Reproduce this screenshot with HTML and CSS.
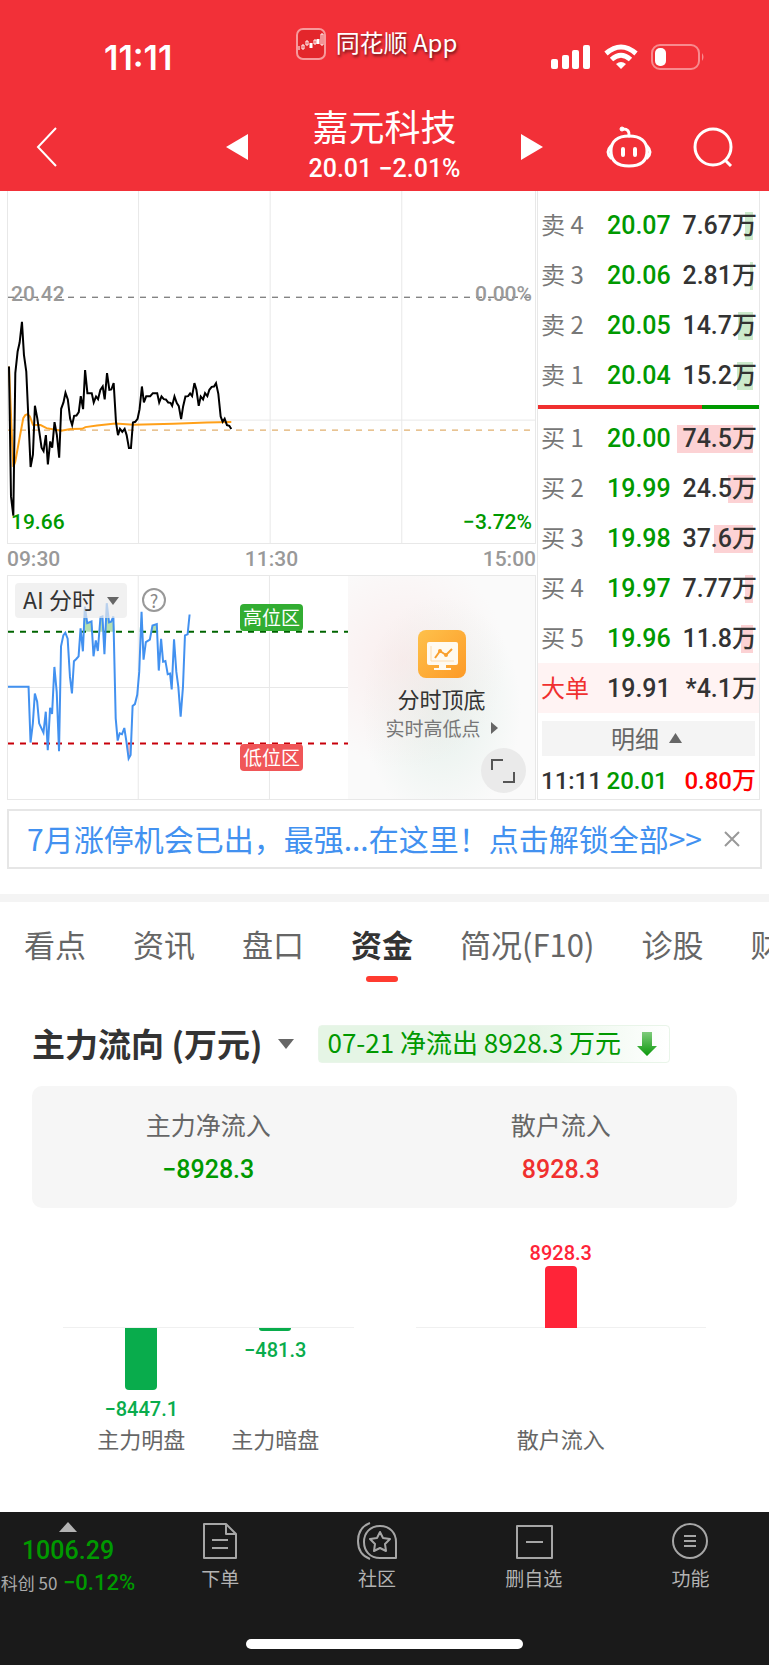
FILE: index.html
```html
<!DOCTYPE html>
<html lang="zh-CN">
<head>
	<meta charset="utf-8">
	<meta name="viewport" content="width=device-width, initial-scale=1">
	<title>嘉元科技</title>
	<link rel="stylesheet" href="styles.css">
</head>
<body>

	<header class="header">
		<div class="status-bar">
			<div class="status-time">11:11</div>
			<div class="status-app">
				<svg class="app-icon" width="30" height="32" viewBox="0 0 30 32" fill="none" stroke="#fff">
					<rect x="1" y="1" width="28" height="30" rx="6" fill="#e3262b" stroke="#f79a9c" stroke-width="2"/>
					<path d="M3 18v4M6 17v4h2v-4zM10 13v4h2v-4z"/>
					<path d="M15 15v5M22 11v5" stroke-width="3"/>
					<path d="M18 12v4h2v-4zM25 6v11h2V6z"/>
				</svg>
				<span>同花顺 App</span>
			</div>
			<div class="status-icons">
				<svg width="40" height="26" viewBox="0 0 40 26" fill="#fff">
					<rect x="0" y="15" width="7" height="10" rx="2"/>
					<rect x="11" y="11" width="7" height="14" rx="2"/>
					<rect x="21" y="6" width="7" height="19" rx="2"/>
					<rect x="32" y="1" width="7" height="24" rx="2"/>
				</svg>
				<svg width="34" height="26" viewBox="0 0 34 26" fill="none" stroke="#fff" stroke-width="5">
					<path d="M2 9.500Q17-3.500 32 9.500M7.500 15.500Q17 7 26.500 15.500"/>
					<path d="M17 25l-5-5q5-4 10 0z" fill="#fff" stroke="none"/>
				</svg>
				<svg width="54" height="26" viewBox="0 0 54 26" fill="none">
					<rect x="1" y="1" width="47" height="24" rx="8" stroke="#f88a8e" stroke-width="2"/>
					<rect x="4" y="4" width="11" height="18" rx="5" fill="#fff"/>
					<path d="M51 9q3 4 0 8z" fill="#f88a8e"/>
				</svg>
			</div>
		</div>

		<div class="title-bar">
			<button class="icon-button back-button" aria-label="返回">
				<svg width="22" height="40" viewBox="0 0 22 40" fill="none" stroke="#fff" stroke-width="2"><path d="M20 1L2 20l18 19"/></svg>
			</button>
			<div class="stock-switch">
				<button class="icon-button" aria-label="上一只"><svg width="22" height="26" viewBox="0 0 22 26" fill="#fff"><path d="M22 0v26L0 13z"/></svg></button>
				<div class="stock-title">
					<h1 class="stock-name">嘉元科技</h1>
					<div class="stock-price">20.01 −2.01%</div>
				</div>
				<button class="icon-button" aria-label="下一只"><svg width="22" height="26" viewBox="0 0 22 26" fill="#fff"><path d="M0 0v26l22-13z"/></svg></button>
			</div>
			<div class="title-actions">
				<button class="icon-button" aria-label="智能助手">
					<svg width="46" height="42" viewBox="0 0 46 42" fill="none" stroke="#fff" stroke-width="3">
						<path d="M23 10C12 10 5 15 5 25c0 10 6 15 18 15s18-5 18-15C41 15 34 10 23 10z"/>
						<path d="M5 20q-6 6 0 12M41 20q6 6 0 12M23 10q1-7-6-7" stroke-linecap="round"/>
						<circle cx="16" cy="3" r="2" fill="#fff" stroke-width="1"/>
						<path d="M17 23v6M29 23v6" stroke-width="4" stroke-linecap="round"/>
					</svg>
				</button>
				<button class="icon-button" aria-label="搜索">
					<svg width="40" height="40" viewBox="0 0 40 40" fill="none" stroke="#fff" stroke-width="3">
						<circle cx="20" cy="20" r="18"/><path d="M32 33l6 6"/>
					</svg>
				</button>
			</div>
		</div>
	</header>

	<section class="quote">
		<div class="charts">
			<div class="price-chart">
				<svg class="plot" viewBox="22 3 1586 1057" preserveAspectRatio="none">
					<path class="grid-line" d="M415 3V1060M811 3V1060M1207 3V1060M22 691H1608"/>
					<path class="base-line" d="M22 322H1608"/>
					<path class="now-line" d="M22 721H1608"/>
					<polyline class="avg-line" points="25,530 32,700 38,832 44,815 55,755 68,685 74,676 81,673 88,680 97,705 120,706 138,715 160,719 182,723 210,718 245,717 255,712 290,707 345,701 400,705 520,702 620,698 694,697"/>
					<polyline class="price-line" points="25,530 31,920 38,978 44,550 51,485 57,458 64,396 70,495 77,545 84,700 90,832 97,795 103,648 110,685 116,725 123,774 129,784 136,736 142,824 149,755 155,774 162,697 169,735 176,804 182,657 189,638 195,609 202,629 209,687 215,706 221,678 228,677 235,667 241,619 248,658 254,541 261,610 274,610 280,638 287,620 293,628 300,600 307,590 313,629 320,550 327,600 333,599 340,580 347,697 353,736 359,717 366,726 373,717 379,736 386,775 392,775 398,698 405,696 412,687 418,658 425,590 431,638 438,619 450,619 458,610 471,610 477,638 484,620 491,628 497,629 504,638 511,639 516,648 523,620 530,640 536,649 543,688 549,650 556,620 564,619 570,611 576,619 583,580 589,600 596,648 602,620 609,629 615,610 622,619 628,600 635,591 642,590 648,580 655,612 662,680 668,696 674,687 681,706 688,708 694,718"/>
				</svg>
				<span class="plot-label base-price">20.42</span>
				<span class="plot-label base-rate">0.00%</span>
				<span class="plot-label low-price">19.66</span>
				<span class="plot-label low-rate">−3.72%</span>
			</div>
			<div class="time-axis"><span>09:30</span><span>11:30</span><span>15:00</span></div>

			<div class="ai-chart">
				<div class="ai-plot">
					<svg class="plot" viewBox="22 16 1026 672" preserveAspectRatio="none">
						<defs>
							<clipPath id="high"><rect x="22" y="16" width="1026" height="168"/></clipPath>
							<clipPath id="low"><rect x="22" y="521" width="1026" height="167"/></clipPath>
						</defs>
						<path class="grid-line" d="M415 16V688M811 16V688M22 352H1048"/>
						<polygon clip-path="url(#high)" fill="#b4dfb0" points="241,184 248,184 254,108 261,158 274,153 280,190 295,190 301,140 307,138 313,190 320,98 327,156 333,154 340,138 345,190 418,190 425,124 431,190 450,190 458,165 471,161 477,190"/>
						<polygon clip-path="url(#low)" fill="#f5b8bd" points="136,515 142,541 149,515 170,515 176,544 179,515 379,515 386,566 392,555 395,515"/>
						<path class="high-line" d="M22 184H1048"/>
						<path class="low-line" d="M22 521H1048"/>
						<polyline class="ai-line" points="22,350 84,350 90,518 97,460 103,370 110,395 116,460 123,475 129,488 136,425 142,541 149,413 155,432 162,290 169,365 176,544 182,228 189,195 195,187 202,205 209,320 215,370 221,273 228,266 235,258 241,174 248,243 254,108 261,158 274,153 280,258 287,210 293,242 301,140 307,138 313,252 320,98 327,156 333,154 340,138 347,445 353,512 359,490 366,493 373,474 379,513 386,566 392,555 398,408 405,402 412,374 418,305 425,124 431,268 438,215 450,208 458,165 471,161 477,301 484,205 490,274 497,272 504,312 511,310 516,358 523,207 530,305 536,350 543,440 550,350 556,195 564,192 570,132"/>
					</svg>
					<button class="ai-select"><span>AI 分时</span> <svg width="12" height="8" viewBox="0 0 12 8" fill="#666"><path d="M0 0h12L6 8z"/></svg></button>
					<button class="help-button" aria-label="说明">?</button>
					<span class="zone high-zone">高位区</span>
					<span class="zone low-zone">低位区</span>
				</div>
				<div class="ai-promo">
					<svg class="promo-icon" width="48" height="48" viewBox="0 0 48 48" fill="none">
						<defs><linearGradient id="amber" x2="1" y2="1"><stop stop-color="#fec14b"/><stop offset="1" stop-color="#fd9a27"/></linearGradient></defs>
						<rect width="48" height="48" rx="8" fill="url(#amber)"/>
						<rect x="9" y="12" width="31" height="23" rx="2" fill="#fffaf0"/>
						<path d="M21 35h7v3h5v2H16v-2h5z" fill="#fffaf0"/>
						<path d="M13 16v15h23" stroke="#fddcae"/>
						<path d="M17 28l5-7 6 4 6-6" stroke="#f9a02e" stroke-width="2"/>
						<circle cx="22" cy="21" r="2" fill="#f9a02e"/><circle cx="28" cy="25" r="2" fill="#f9a02e"/>
					</svg>
					<div class="promo-title">分时顶底</div>
					<a class="promo-link" href="#">实时高低点 <svg width="7" height="12" viewBox="0 0 7 12" fill="#666"><path d="M0 0v12l7-6z"/></svg></a>
					<button class="expand-button" aria-label="全屏">
						<svg width="24" height="24" viewBox="0 0 24 24" fill="none" stroke="#555" stroke-width="2"><path d="M1 11V1h11M23 13v10H12"/></svg>
					</button>
				</div>
			</div>
		</div>

		<div class="order-book">
			<table class="orders sell">
				<tr><th>卖 4</th><td class="down">20.07</td><td class="volume"><i style="width:8px"></i><b>7.67万</b></td></tr>
				<tr><th>卖 3</th><td class="down">20.06</td><td class="volume"><i style="width:3px"></i><b>2.81万</b></td></tr>
				<tr><th>卖 2</th><td class="down">20.05</td><td class="volume"><i style="width:15px"></i><b>14.7万</b></td></tr>
				<tr><th>卖 1</th><td class="down">20.04</td><td class="volume"><i style="width:16px"></i><b>15.2万</b></td></tr>
			</table>
			<div class="ratio-bar"><div class="ratio-buy" style="width:74%"></div></div>
			<table class="orders buy">
				<tr><th>买 1</th><td class="down">20.00</td><td class="volume"><i style="width:76px"></i><b>74.5万</b></td></tr>
				<tr><th>买 2</th><td class="down">19.99</td><td class="volume"><i style="width:25px"></i><b>24.5万</b></td></tr>
				<tr><th>买 3</th><td class="down">19.98</td><td class="volume"><i style="width:39px"></i><b>37.6万</b></td></tr>
				<tr><th>买 4</th><td class="down">19.97</td><td class="volume"><i style="width:8px"></i><b>7.77万</b></td></tr>
				<tr><th>买 5</th><td class="down">19.96</td><td class="volume"><i style="width:12px"></i><b>11.8万</b></td></tr>
				<tr class="big-order"><th>大单</th><td>19.91</td><td class="volume"><b>*4.1万</b></td></tr>
			</table>
			<button class="detail-button">明细 <svg width="13" height="10" viewBox="0 0 13 10" fill="#666"><path d="M0 10h13L6.500 0z"/></svg></button>
			<div class="last-trade"><span>11:11</span><span class="down">20.01</span><span class="trade-volume">0.80万</span></div>
		</div>
	</section>

	<div class="banner">
		<a class="banner-text" href="#">7月涨停机会已出，最强...在这里！点击解锁全部&gt;&gt;</a>
		<button class="icon-button" aria-label="关闭">
			<svg width="16" height="16" viewBox="0 0 16 16" stroke="#999" stroke-width="2"><path d="M1 1l14 14M15 1L1 15"/></svg>
		</button>
	</div>

	<nav class="tabs">
		<a href="#">看点</a>
		<a href="#">资讯</a>
		<a href="#">盘口</a>
		<a href="#" class="active">资金</a>
		<a href="#">简况(F10)</a>
		<a href="#">诊股</a>
		<a href="#">财务</a>
	</nav>

	<main class="funds">
		<div class="funds-head">
			<h2 class="funds-title">主力流向 (万元)</h2>
			<svg width="16" height="10" viewBox="0 0 16 10" fill="#666"><path d="M0 0h16L8 10z"/></svg>
			<div class="flow-tag">
				<span>07-21 净流出 8928.3 万元</span>
				<svg width="20" height="24" viewBox="0 0 20 24">
					<defs><linearGradient id="arrow" x2="0" y2="1"><stop stop-color="#7fcb7c"/><stop offset="1" stop-color="#0a990a"/></linearGradient></defs>
					<path d="M5 0h10v14h5L10 24 0 14h5z" fill="url(#arrow)"/>
				</svg>
			</div>
		</div>

		<div class="summary">
			<div class="summary-item"><span>主力净流入</span><strong class="down">−8928.3</strong></div>
			<div class="summary-item"><span>散户流入</span><strong class="up">8928.3</strong></div>
		</div>

		<div class="bars">
			<div class="bar-group">
				<div class="bar-item">
					<div class="bar-top"></div>
					<div class="bar-bottom"><div class="bar" style="height:62px"></div><span>−8447.1</span></div>
					<div class="bar-name">主力明盘</div>
				</div>
				<div class="bar-item">
					<div class="bar-top"></div>
					<div class="bar-bottom"><div class="bar" style="height:3px"></div><span>−481.3</span></div>
					<div class="bar-name">主力暗盘</div>
				</div>
			</div>
			<div class="bar-group">
				<div class="bar-item">
					<div class="bar-top"><span>8928.3</span><div class="bar" style="height:62px"></div></div>
					<div class="bar-bottom"></div>
					<div class="bar-name">散户流入</div>
				</div>
			</div>
		</div>
	</main>

	<footer class="footer">
		<nav class="bottom-nav">
			<a class="index-item" href="#">
				<svg width="18" height="10" viewBox="0 0 18 10" fill="#b3b3b3"><path d="M0 10h18L9 0z"/></svg>
				<span class="index-value">1006.29</span>
				<span class="index-line"><span class="index-name">科创 50</span> −0.12%</span>
			</a>
			<a class="nav-item" href="#">
				<svg width="40" height="38" viewBox="0 0 40 38"><path d="M4 2h22l10 10v24H4zM26 2v10h10M12 18h16M12 26h16"/></svg>
				<span>下单</span>
			</a>
			<a class="nav-item" href="#">
				<svg width="40" height="38" viewBox="0 0 40 38"><path d="M39 36H23C13 36 7 29 7 20S13 4 23 4s16 7 16 16zM13 1C5 4 1 11 1 19s4 15 12 18M23 10l3 6 7 1-5 5 1 7-6-3-6 3 1-7-5-5 7-1z"/></svg>
				<span>社区</span>
			</a>
			<a class="nav-item" href="#">
				<svg width="40" height="38" viewBox="0 0 40 38"><path d="M3 4h35v32H3zM12 20h17"/></svg>
				<span>删自选</span>
			</a>
			<a class="nav-item" href="#">
				<svg width="40" height="38" viewBox="0 0 40 38"><circle cx="19" cy="19" r="17"/><path d="M13 14h12M13 19h12M13 24h12"/></svg>
				<span>功能</span>
			</a>
		</nav>
		<div class="home-bar"></div>
	</footer>

</body>
</html>
```
FILE: styles.css
```css
* {
	box-sizing: border-box;
	margin: 0;
	padding: 0;
}

body {
	font-family: "Noto Sans CJK SC", sans-serif;
	color: #333;
	background: #fff;
	min-height: 100vh;
	display: flex;
	flex-direction: column;
	overflow-x: hidden;
}

svg {
	display: block;
	flex: none;
}

a {
	color: inherit;
	text-decoration: none;
}

button {
	font: inherit;
	color: inherit;
	border: none;
	background: none;
}

.down { color: #090; }
.up { color: #f0302f; }

/* header */
.header {
	background: #f23038;
	color: #fff;
	height: 191px;
}

.status-bar {
	display: grid;
	grid-template-columns: 1fr auto 1fr;
	height: 103px;
	padding: 28px 64px 0;
}

.status-time {
	padding-left: 40px;
	font-family: Inter, sans-serif;
	font-size: 34px;
	font-weight: 600;
	line-height: 60px;
}

.status-app {
	display: flex;
	gap: 10px;
	height: 32px;
	align-items: center;
	font-size: 24px;
	line-height: 28px;
	text-shadow: 1px 2px 3px rgba(0, 0, 0, 0.6);
	margin-right: 16px;
}

.status-app span {
	padding-bottom: 4px;
}

.status-icons {
	display: flex;
	justify-content: flex-end;
	gap: 13px;
	padding-top: 16px;
}

.title-bar {
	display: grid;
	grid-template-columns: 1fr auto 1fr;
	align-items: center;
	padding: 0 36px;
}

.icon-button {
	display: block;
}

.back-button {
	justify-self: start;
}

.stock-switch {
	display: flex;
	align-items: center;
	gap: 60px;
}

.stock-title {
	text-align: center;
}

.stock-name {
	font-size: 36px;
	font-weight: 400;
	line-height: 44px;
}

.stock-price {
	font: 500 25px/44px Roboto, sans-serif;
}

.title-actions {
	display: flex;
	justify-content: flex-end;
	align-items: center;
	gap: 41px;
}

/* quote */
.quote {
	display: grid;
	grid-template-columns: 1fr 223px;
	gap: 1px;
	padding: 0 9px 0 7px;
}

.plot {
	width: 100%;
	height: 100%;
}

.plot * {
	vector-effect: non-scaling-stroke;
}

.plot path,
.plot polyline {
	fill: none;
}

.grid-line { stroke: #e8e8e8; }
.base-line { stroke: #555; stroke-dasharray: 6 6; }
.now-line { stroke: #d89a48; stroke-dasharray: 6 6; }
.avg-line { stroke: #ffa019; stroke-width: 2; }
.price-line { stroke: #000; stroke-width: 2; }
.ai-line { stroke: #4291f0; stroke-width: 2; }
.high-line { stroke: #006400; stroke-width: 2; stroke-dasharray: 6 6; }
.low-line { stroke: #c8000a; stroke-width: 2; stroke-dasharray: 6 6; }

.price-chart {
	position: relative;
	height: 353px;
	border: 1px solid #e8e8e8;
	border-top: none;
}

.plot-label {
	position: absolute;
	font: 500 21px/24px Roboto, sans-serif;
	color: #999;
}

.base-price { left: 3px; top: 91px; }
.base-rate { right: 3px; top: 91px; }
.low-price { left: 3px; bottom: 9px; color: #090; }
.low-rate { right: 3px; bottom: 9px; color: #090; }

.time-axis {
	display: flex;
	justify-content: space-between;
	font: 500 21px/31px Roboto, sans-serif;
	color: #999;
}

.ai-chart {
	display: grid;
	grid-template-columns: 1fr 187px;
	height: 225px;
	border: 1px solid #e8e8e8;
}

.ai-plot {
	position: relative;
	min-width: 0;
	height: 223px;
}

.ai-select {
	position: absolute;
	left: 7px;
	top: 7px;
	display: flex;
	align-items: center;
	gap: 12px;
	height: 35px;
	padding: 0 8px;
	border-radius: 4px;
	background: rgba(235, 235, 235, 0.7);
	font-size: 23px;
	line-height: 32px;
	white-space: nowrap;
}

.ai-select span {
	padding-bottom: 4px;
}

.help-button {
	position: absolute;
	left: 134px;
	top: 12px;
	width: 24px;
	height: 24px;
	border: 2px solid #999;
	border-radius: 50%;
	font-size: 18px;
	line-height: 18px;
	color: #888;
}

.zone {
	position: absolute;
	left: 232px;
	height: 27px;
	padding: 0 3px;
	border-radius: 4px;
	font-size: 19px;
	line-height: 25px;
	color: #fff;
}

.high-zone { top: 28px; background: #32ad32; }
.low-zone { top: 168px; background: #f05658; }

.ai-promo {
	position: relative;
	display: flex;
	flex-direction: column;
	align-items: center;
	padding-top: 54px;
	background:
		radial-gradient(ellipse at 30% 38%, rgba(250, 225, 225, 0.5), transparent 55%),
		radial-gradient(ellipse at 50% 60%, rgba(225, 238, 232, 0.8), transparent 60%),
		#fafafa;
}

.promo-title {
	margin-top: 4px;
	font-size: 22px;
	line-height: 32px;
}

.promo-link {
	display: flex;
	align-items: center;
	gap: 10px;
	font-size: 19px;
	line-height: 28px;
	color: #777;
}

.expand-button {
	position: absolute;
	right: 9px;
	bottom: 6px;
	width: 45px;
	height: 45px;
	padding: 10px;
	border-radius: 50%;
	background: #eaeaea;
}

/* order book */
.order-book {
	padding-top: 9px;
	border: 1px solid #e8e8e8;
	border-top: none;
}

.orders {
	width: 100%;
	border-collapse: collapse;
}

.orders tr {
	height: 50px;
}

.orders th {
	width: 65px;
	padding: 0 0 2px 3px;
	font-size: 24px;
	font-weight: 400;
	line-height: 28px;
	text-align: left;
	color: #777;
}

.orders td,
.last-trade {
	font: 500 25px/28px Roboto, "Noto Sans CJK SC", sans-serif;
}

.orders td {
	padding: 2px 0 0 4px;
}

.orders .volume {
	position: relative;
	padding-right: 2px;
	text-align: right;
}

.volume b {
	position: relative;
	font-weight: 500;
}

/* size of the order, drawn under the number */
.volume i {
	position: absolute;
	right: 6px;
	top: 12px;
	height: 28px;
}

.sell i { background: #cbeacb; }
.buy i { background: #fcd2d4; }

.ratio-bar {
	height: 4px;
	margin: 5px 0 4px;
	background: #090;
}

.ratio-buy {
	height: 4px;
	background: #f0302f;
}

.orders .big-order {
	background: #fff3f3;
}

.orders .big-order th {
	color: #f0302f;
}

.detail-button {
	display: flex;
	align-items: center;
	justify-content: center;
	gap: 10px;
	width: calc(100% - 8px);
	height: 35px;
	margin: 8px 4px 4px;
	padding: 0 4px 2px 0;
	background: #f4f4f4;
	font-size: 24px;
	color: #666;
}

.last-trade {
	display: flex;
	justify-content: space-between;
	padding: 7px 3px 0;
	font-size: 24px;
}

.trade-volume {
	color: red;
	font-weight: 500;
	padding-left: 12px;
}

/* banner */
.banner {
	display: flex;
	align-items: center;
	justify-content: space-between;
	height: 60px;
	margin: 9px 7px 25px;
	padding: 0 20px 0 18px;
	border: 2px solid #e6e6e6;
}

.banner-text {
	padding-bottom: 2px;
	font-size: 30px;
	line-height: 40px;
	color: #4291f0;
	white-space: nowrap;
}

/* tabs */
.tabs {
	display: flex;
	gap: 47px;
	padding: 12px 0 0 24px;
	border-top: 8px solid #f4f4f4;
	font-size: 31px;
	line-height: 60px;
	color: #666;
	white-space: nowrap;
	overflow: hidden;
}

.tabs a {
	flex: none;
}

.tabs .active {
	font-weight: 700;
	color: #333;
}

.tabs .active::after {
	content: "";
	display: block;
	width: 32px;
	height: 6px;
	margin: 2px auto 0;
	border-radius: 3px;
	background: #ff3b30;
}

/* funds */
.funds {
	flex: 1;
	padding: 43px 32px 0;
}

.funds-head {
	display: flex;
	align-items: center;
	gap: 16px;
	height: 38px;
}

.funds-title {
	padding-bottom: 2px;
	font-size: 33px;
	font-weight: 700;
	line-height: 38px;
}

.flow-tag {
	display: flex;
	align-items: center;
	gap: 16px;
	height: 38px;
	margin-left: 8px;
	padding: 0 12px 0 8px;
	border: 1px solid #e9f5e9;
	border-radius: 4px;
	background: linear-gradient(90deg, #e5f5e5 60%, #fff);
	font-size: 26px;
	line-height: 32px;
	color: #090;
	white-space: nowrap;
}

.flow-tag span {
	padding-bottom: 4px;
}

.summary {
	display: grid;
	grid-template-columns: 1fr 1fr;
	margin-top: 23px;
	padding: 18px 0;
	border-radius: 10px;
	background: #f6f6f6;
}

.summary-item {
	display: flex;
	flex-direction: column;
	align-items: center;
	gap: 6px;
	font-size: 25px;
	line-height: 40px;
	color: #666;
}

.summary-item strong {
	font-family: Roboto, sans-serif;
	font-weight: 500;
}

.summary-item .down { color: #090; }
.summary-item .up { color: #f0302f; }

.bars {
	display: grid;
	grid-template-columns: 1fr 1fr;
	gap: 62px;
	padding: 27px 31px 0;
}

.bar-group {
	display: flex;
	justify-content: center;
	gap: 46px;
	background: linear-gradient(#f0f0f0, #f0f0f0) 0 92px / 100% 1px no-repeat;
}

.bar-item {
	display: flex;
	flex-direction: column;
	align-items: center;
	font: 500 20px/26px Roboto, sans-serif;
}

.bar-top,
.bar-bottom {
	display: flex;
	flex-direction: column;
	align-items: center;
}

.bar-top {
	justify-content: flex-end;
	height: 93px;
	color: #ff2438;
}

.bar-bottom {
	gap: 6px;
	height: 94px;
	color: #09ac4c;
}

.bar {
	width: 32px;
	background: currentColor;
}

.bar-top .bar { border-radius: 4px 4px 0 0; }
.bar-bottom .bar { border-radius: 0 0 4px 4px; }

.bar-name {
	font: 400 22px/32px "Noto Sans CJK SC", sans-serif;
	color: #666;
}

/* footer */
.footer {
	height: 153px;
	background: #1a1a1a;
	color: #b3b3b3;
}

.bottom-nav {
	display: flex;
	height: 127px;
	padding-top: 10px;
}

.index-item {
	display: flex;
	flex-direction: column;
	align-items: center;
	width: 142px;
	padding-right: 6px;
	font-family: Roboto, sans-serif;
	color: #090;
	white-space: nowrap;
}

.index-value {
	font-size: 25px;
	font-weight: 500;
	line-height: 38px;
}

.index-line {
	font-size: 22px;
	font-weight: 500;
	line-height: 26px;
}

.index-name {
	font: 400 17px "Noto Sans CJK SC", sans-serif;
	color: #aaa;
}

.nav-item {
	flex: 1;
	display: flex;
	flex-direction: column;
	align-items: center;
	gap: 4px;
	font-size: 19px;
	line-height: 28px;
}

.nav-item svg {
	fill: none;
	stroke: #a6a6a6;
	stroke-width: 2;
	stroke-linejoin: round;
}

.home-bar {
	width: 36%;
	height: 10px;
	margin: 0 auto;
	border-radius: 5px;
	background: #fff;
}
```
